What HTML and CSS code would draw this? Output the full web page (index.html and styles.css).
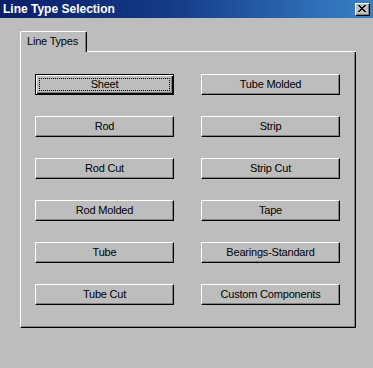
FILE: index.html
```html
<!DOCTYPE html>
<html>
<head>
<meta charset="utf-8">
<title>Line Type Selection</title>
<link rel="stylesheet" href="styles.css">
</head>
<body>
<div class="window">
  <div class="titlebar">
    <span class="title">Line Type Selection</span>
    <button class="close" aria-label="Close">
      <svg width="8" height="7" viewBox="0 0 8 7"><path d="M0 0h2v1h1v1h2V1h1V0h2v1H7v1H6v1H5v1h1v1h1v1h1v1H6V6H5V5H3v1H2v1H0V6h1V5h1V4h1V3H2V2H1V1H0z" fill="#000"/></svg>
    </button>
  </div>
  <div class="content">
    <div class="tabrow">
      <div class="tab">Line Types</div>
      <div class="tabfill"></div>
    </div>
    <div class="panel">
      <div class="grid">
        <button class="btn default">Sheet</button>
        <button class="btn">Tube Molded</button>
        <button class="btn">Rod</button>
        <button class="btn">Strip</button>
        <button class="btn">Rod Cut</button>
        <button class="btn">Strip Cut</button>
        <button class="btn">Rod Molded</button>
        <button class="btn">Tape</button>
        <button class="btn">Tube</button>
        <button class="btn">Bearings-Standard</button>
        <button class="btn">Tube Cut</button>
        <button class="btn">Custom Components</button>
      </div>
    </div>
  </div>
</div>
</body>
</html>
```
FILE: styles.css
```css
html, body {
  margin: 0;
  padding: 0;
  background: #bdbdbd;
  height: 100%;
}
body {
  font-family: "Liberation Sans", Arial, sans-serif;
  font-size: 11px;
  color: #000;
}
.window {
  width: 373px;
  height: 368px;
  background: #bdbdbd;
}
.titlebar {
  height: 18px;
  display: flex;
  align-items: center;
  justify-content: space-between;
  padding: 0 3px 0 3px;
  box-sizing: border-box;
  background: linear-gradient(to right, #0a1f6a 0%, #143a86 45%, #2f6fb8 85%, #3a7fc4 100%);
}
.title {
  color: #fff;
  font-weight: bold;
  font-size: 12px;
  line-height: 18px;
}
.close {
  width: 15px;
  height: 13px;
  padding: 0;
  margin: 0;
  background: #bdbdbd;
  border-style: solid;
  border-width: 1px;
  border-color: #fff #000 #000 #fff;
  box-shadow: inset -1px -1px 0 #808080;
  display: flex;
  align-items: center;
  justify-content: center;
  box-sizing: border-box;
}
.close svg { display: block; margin-left: -1px; margin-top: -1px; }
.content {
  padding: 13px 17px 0 20px;
}
.tabrow {
  display: flex;
  height: 21px;
}
.tab {
  width: 67px;
  height: 21px;
  box-sizing: border-box;
  border-top: 1px solid #fff;
  border-left: 1px solid #fff;
  border-right: 1px solid #000;
  border-top-left-radius: 2px;
  border-top-right-radius: 2px;
  box-shadow: inset -1px 0 0 #808080;
  padding: 1px 0 0 6px;
  line-height: 17px;
  letter-spacing: -0.2px;
}
.tabfill {
  flex: 1;
  border-bottom: 1px solid #fff;
}
.panel {
  border-left: 1px solid #fff;
  border-right: 1px solid #000;
  border-bottom: 1px solid #000;
  box-shadow: inset -1px -1px 0 #808080;
  padding: 22px 15px 22px 14px;
}
.grid {
  display: grid;
  grid-template-columns: 139px 139px;
  column-gap: 27px;
  row-gap: 21px;
}
.btn {
  height: 21px;
  box-sizing: border-box;
  margin: 0;
  padding: 0;
  background: #bdbdbd;
  font-family: "Liberation Sans", Arial, sans-serif;
  font-size: 11px;
  letter-spacing: -0.2px;
  color: #000;
  border-style: solid;
  border-width: 1px;
  border-color: #fff #000 #000 #fff;
  box-shadow: inset -1px -1px 0 #808080;
  line-height: 17px;
}
.btn.default {
  border-color: #000;
  box-shadow: inset 1px 1px 0 #fff, inset -1px -1px 0 #000, inset -2px -2px 0 #808080;
  outline: 1px dotted #000;
  outline-offset: -5px;
}
```
